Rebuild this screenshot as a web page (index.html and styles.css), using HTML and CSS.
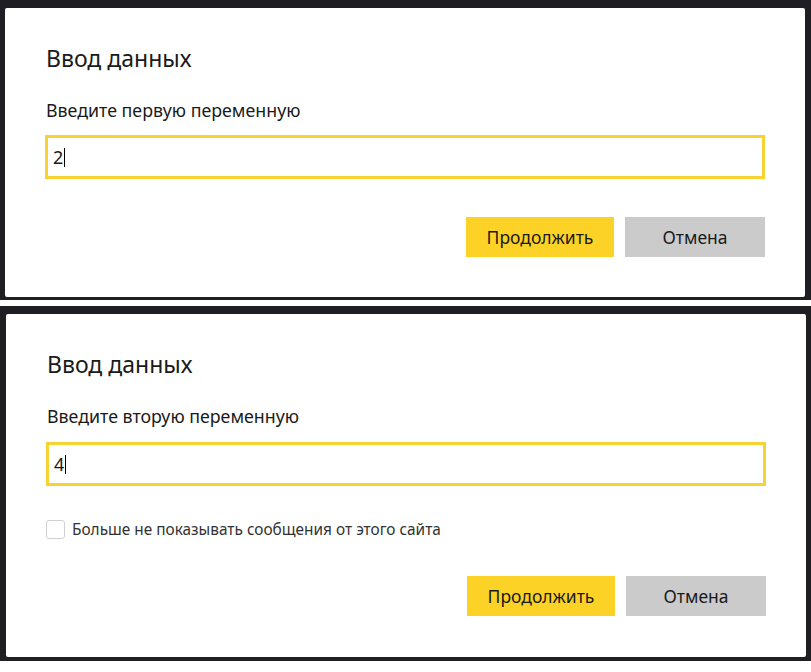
FILE: index.html
```html
<!DOCTYPE html>
<html lang="ru">
<head>
<meta charset="utf-8">
<title>Ввод данных</title>
<link rel="stylesheet" href="styles.css">
</head>
<body>
<div class="shot shot-first">
  <div class="dialog">
    <h1 class="title">Ввод данных</h1>
    <p class="label">Введите первую переменную</p>
    <div class="field"><span class="value">2</span><span class="caret"></span></div>
    <div class="actions">
      <button class="btn btn-primary">Продолжить</button>
      <button class="btn btn-secondary">Отмена</button>
    </div>
  </div>
</div>
<div class="shot shot-second">
  <div class="dialog dialog-second">
    <h1 class="title">Ввод данных</h1>
    <p class="label">Введите вторую переменную</p>
    <div class="field"><span class="value">4</span><span class="caret"></span></div>
    <label class="check">
      <span class="box"></span>
      <span class="check-text">Больше не показывать сообщения от этого сайта</span>
    </label>
    <div class="actions actions-second">
      <button class="btn btn-primary">Продолжить</button>
      <button class="btn btn-secondary">Отмена</button>
    </div>
  </div>
</div>
</body>
</html>
```
FILE: styles.css
```css
html, body {
  margin: 0;
  padding: 0;
  background: #ffffff;
}
body {
  width: 811px;
  height: 672px;
  overflow: hidden;
  font-family: "Noto Sans", "Open Sans", sans-serif;
  color: #1a1a1a;
}
.shot {
  background: #1f1e23;
}
.shot-first {
  padding: 8px 6px 3px 5px;
}
.shot-second {
  margin-top: 6px;
  padding: 8px 5px 4px 6px;
}
.dialog {
  background: #ffffff;
  border-radius: 2px;
  padding: 35px 40px 0 40px;
  height: 289px;
  box-sizing: border-box;
}
.dialog-second {
  padding-top: 35px;
  height: 343px;
}
.title {
  margin: 0 0 0 1px;
  font-size: 23px;
  line-height: 31px;
  font-weight: 400;
}
.label {
  margin: 24px 0 0 1px;
  font-size: 17.8px;
  line-height: 24px;
}
.field {
  margin-top: 13px;
  height: 44px;
  box-sizing: border-box;
  border: 3px solid #f6d233;
  padding: 0 5px;
  display: flex;
  align-items: center;
  font-size: 18px;
}
.dialog-second .field {
  margin-top: 14px;
}
.caret {
  display: inline-block;
  width: 1px;
  height: 19px;
  background: #000;
  margin-left: 1px;
}
.check {
  display: flex;
  align-items: center;
  margin-top: 33px;
  height: 20px;
}
.box {
  width: 17px;
  height: 17px;
  border: 1px solid #cfcfcf;
  border-radius: 3px;
  background: #fff;
  flex: none;
}
.check-text {
  margin-left: 7px;
  font-size: 15.4px;
  color: #333;
}
.actions {
  display: flex;
  justify-content: flex-end;
  gap: 11px;
  margin-top: 38px;
}
.actions-second {
  margin-top: 37px;
}
.btn {
  border: none;
  height: 40px;
  font-family: "Noto Sans", "Open Sans", sans-serif;
  font-size: 17.5px;
  color: #1a1a1a;
  padding: 0;
  cursor: pointer;
}
.btn-primary {
  width: 148px;
  background: #fdd226;
}
.btn-secondary {
  width: 140px;
  background: #cbcbcb;
}
```
